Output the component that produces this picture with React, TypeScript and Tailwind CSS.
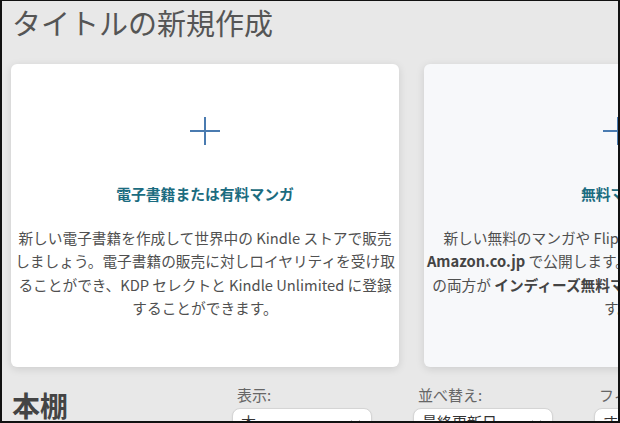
const jp = { fontFamily: '"Noto Sans CJK JP", "Noto Sans", sans-serif' };

function Plus() {
  return (
    <svg width="32" height="30" viewBox="0 0 32 30" fill="none">
      <path d="M16 1v28M1 15h30" stroke="#4a7bb0" strokeWidth="2" />
    </svg>
  );
}

function Chevron() {
  return (
    <svg width="11" height="7" viewBox="0 0 11 7" fill="none">
      <path d="M1 1l4.5 4.5L10 1" stroke="#333" strokeWidth="1.6" />
    </svg>
  );
}

interface CardProps {
  title: string;
  lines: React.ReactNode[];
  tint?: boolean;
}

function CreateCard({ title, lines, tint }: CardProps) {
  return (
    <div
      className={`w-[388px] h-[303px] shrink-0 rounded-md flex flex-col items-center pt-[52px] shadow-[0_2px_8px_rgba(0,0,0,0.12)] ${
        tint ? 'bg-[#f7f8fa]' : 'bg-white'
      }`}
    >
      <Plus />
      <div className="mt-[38px] text-[14.8px] leading-[20px] font-bold text-[#1b6c80]">{title}</div>
      <div className="mt-[22px] text-[14.7px] leading-[23.3px] text-[#505050] text-center">
        {lines.map((l, i) => (
          <div key={i} className="whitespace-nowrap">
            {l}
          </div>
        ))}
      </div>
    </div>
  );
}

function SelectBox({ label, value }: { label: string; value: string }) {
  return (
    <div className="w-[140px] shrink-0">
      <div className="mt-[5px] pl-[5px] text-[15px] leading-[20px] text-[#666]">{label}</div>
      <div className="mt-[3px] h-[34px] rounded-lg bg-white border border-[#d5d5d5] shadow-[0_1px_2px_rgba(0,0,0,0.08)] flex items-start justify-between px-[8px] pt-[3px]">
        <span className="text-[15px] leading-[20px] text-[#333]">{value}</span>
        <span className="mr-[2px] mt-[8px]">
          <Chevron />
        </span>
      </div>
    </div>
  );
}

export default function App() {
  return (
    <div
      style={jp}
      className="w-[620px] h-[423px] overflow-hidden bg-[#e8e8e8] border-l-2 border-t border-r-2 border-b-2 border-[#111]"
    >
      {/* Header */}
      <h1 className="pl-[10px] pt-[1px] text-[29px] leading-[40px] text-[#555] font-normal">タイトルの新規作成</h1>

      {/* Create cards */}
      <div className="mt-[22px] pl-[9px] flex gap-[25px]">
        <CreateCard
          title="電子書籍または有料マンガ"
          lines={[
            '新しい電子書籍を作成して世界中の Kindle ストアで販売',
            'しましょう。電子書籍の販売に対しロイヤリティを受け取',
            'ることができ、KDP セレクトと Kindle Unlimited に登録',
            'することができます。',
          ]}
        />
        <CreateCard
          tint
          title="無料マンガ"
          lines={[
            '新しい無料のマンガや Flipbook を作成し、Kindle と',
            <>
              <b className="text-[#444]">Amazon.co.jp</b> で公開します。 紙のコミックスと電子書籍
            </>,
            <>
              の両方が <b className="text-[#444]">インディーズ無料マンガ</b> として無料公開されま
            </>,
            'す。',
          ]}
        />
      </div>

      {/* Bookshelf */}
      <div className="mt-[13px] pl-[10px] flex items-start">
        <div className="w-[220px] shrink-0 text-[28px] leading-[50px] font-bold text-[#444]">本棚</div>
        <div className="flex gap-[41px]">
          <SelectBox label="表示:" value="本" />
          <SelectBox label="並べ替え:" value="最終更新日" />
          <SelectBox label="フィルター:" value="すべて" />
        </div>
      </div>
    </div>
  );
}
